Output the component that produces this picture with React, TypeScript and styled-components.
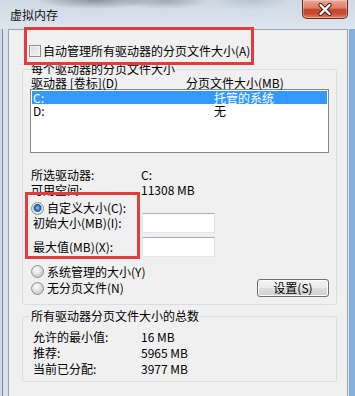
import React from 'react';
import styled, { createGlobalStyle } from 'styled-components';

const GlobalStyle = createGlobalStyle`
    html, body {
        margin: 0;
        padding: 0;
        background: #ffffff;
    }
    * {
        box-sizing: border-box;
    }
`;

const Window = styled.div`
    position: relative;
    width: 355px;
    height: 396px;
    overflow: hidden;
    display: flex;
    flex-direction: column;
    font-family: 'Noto Sans CJK SC', 'Liberation Sans', sans-serif;
    font-size: 12px;
    color: #000;
    background: linear-gradient(180deg, #d3dde8 0%, #dbe4ee 40px, #d3dfeb 100%);
`;

const TitleBar = styled.div`
    flex: none;
    height: 29px;
    display: flex;
    justify-content: space-between;
    align-items: flex-start;
    padding: 0 7px 0 10px;
    background:
        radial-gradient(60px 9px at 95px 0, rgba(70, 75, 80, 0.5), transparent),
        radial-gradient(45px 8px at 165px 1px, rgba(90, 95, 100, 0.4), transparent),
        radial-gradient(40px 10px at 250px 0, rgba(140, 160, 185, 0.4), transparent),
        linear-gradient(180deg, #cfd9e4 0%, #dde5ee 100%);
`;

const Title = styled.div`
    margin-top: 7px;
    line-height: 16px;
    font-size: 12px;
    color: #111;
`;

const CloseButton = styled.div`
    width: 46px;
    height: 19px;
    border: 1px solid #6a2a20;
    border-top: none;
    border-radius: 0 0 5px 5px;
    background: linear-gradient(180deg, #eaa998 0%, #dc7c65 45%, #c8472c 52%, #c64a30 75%, #e08060 100%);
    box-shadow: inset 0 0 0 1px rgba(255, 255, 255, 0.3);
    display: flex;
    align-items: center;
    justify-content: center;
`;

const Frame = styled.div`
    flex: 1;
    display: flex;
    min-height: 0;
`;

const LeftEdge = styled.div`
    width: 8px;
    flex: none;
    background: linear-gradient(90deg, #cdd8e3 0 2px, #7d8c9c 2px 3px, #d8e2ec 3px);
`;

const RightEdge = styled.div`
    width: 7px;
    flex: none;
    background: linear-gradient(90deg, #e4ebf2 0 1px, #8ba6c2 1px 2px, #85afdd 2px);
`;

const Client = styled.div`
    flex: 1;
    background: #f0f0f0;
    border: 1px solid #95a3b2;
    border-bottom: none;
    padding: 13px 10px 0 13px;
`;

const CheckRow = styled.label`
    display: flex;
    align-items: center;
    gap: 2px;
    height: 16px;
    line-height: 16px;
    padding-left: 7px;
`;

const Checkbox = styled.span`
    width: 12px;
    height: 12px;
    border: 1px solid #8e8f8f;
    background: linear-gradient(135deg, #d6d8dc 0%, #f7f7f7 100%);
    box-shadow: inset 0 0 0 1px #f4f4f4;
`;

const Group = styled.fieldset<{ $mt: number; $pt?: number; $pb: number }>`
    margin: ${(p) => p.$mt}px 0 0;
    padding: ${(p) => p.$pt ?? 0}px 7px ${(p) => p.$pb}px;
    border: 1px solid #d5dfe5;
    border-radius: 3px;
    min-width: 0;
`;

const Legend = styled.legend`
    padding: 0 1px;
    height: 16px;
    line-height: 16px;
    font-size: 12px;
`;

const HeaderRow = styled.div`
    display: flex;
    height: 12px;
    line-height: 12px;
    padding-left: 1px;
`;

const Cell = styled.span<{ $w?: number }>`
    flex: none;
    white-space: nowrap;
    width: ${(p) => (p.$w ? `${p.$w}px` : 'auto')};
`;

const ListBox = styled.div`
    height: 64px;
    border: 1px solid #828790;
    background: #ffffff;
    padding: 1px;
`;

const ListRow = styled.div<{ $selected?: boolean }>`
    display: flex;
    height: 13px;
    line-height: 13px;
    padding-left: 1px;
    background: ${(p) => (p.$selected ? '#3399ff' : 'transparent')};
    color: ${(p) => (p.$selected ? '#ffffff' : '#000000')};
`;

const InfoRow = styled.div<{ $h: number; $mt?: number }>`
    display: grid;
    grid-template-columns: 111px 1fr;
    align-items: center;
    height: ${(p) => p.$h}px;
    margin-top: ${(p) => p.$mt ?? 0}px;
    line-height: 16px;
    white-space: nowrap;
`;

const InfoLabel = styled.span<{ $indent?: number }>`
    padding-left: ${(p) => p.$indent ?? 1}px;
`;

const TextBox = styled.div`
    width: 73px;
    height: 20px;
    margin-left: 1px;
    background: #ffffff;
    border: 1px solid;
    border-color: #abadb3 #dbdfe6 #e3e9ef #e2e3ea;
`;

const RadioRow = styled.label<{ $h: number; $mt?: number }>`
    display: flex;
    align-items: center;
    gap: 3px;
    height: ${(p) => p.$h}px;
    margin-top: ${(p) => p.$mt ?? 0}px;
    line-height: 16px;
    padding-left: 1px;
    white-space: nowrap;
`;

const Radio = styled.span<{ $checked?: boolean }>`
    flex: none;
    width: 13px;
    height: 13px;
    border-radius: 50%;
    border: 1px solid #8e8f8f;
    background: ${(p) =>
        p.$checked
            ? 'radial-gradient(circle at 50% 45%, #b6dcff 0, #4a90da 1.5px, #1d5a9c 3.5px, #eef0f2 4.5px, #d6d8da 6px)'
            : 'radial-gradient(circle at 40% 35%, #fdfdfd 0, #e4e4e4 4px, #d0d0d0 6px)'};
`;

const Button = styled.div`
    margin-left: auto;
    width: 72px;
    height: 18px;
    border: 1px solid #707070;
    border-radius: 3px;
    background: linear-gradient(180deg, #f2f2f2 0%, #ebebeb 50%, #dddddd 50%, #cfcfcf 100%);
    box-shadow: inset 0 0 0 1px #fcfcfc;
    display: flex;
    align-items: center;
    justify-content: center;
    line-height: 16px;
`;

const Callout = styled.div<{ $x: number; $y: number; $w: number; $h: number }>`
    position: absolute;
    left: ${(p) => p.$x}px;
    top: ${(p) => p.$y}px;
    width: ${(p) => p.$w}px;
    height: ${(p) => p.$h}px;
    border: 3px solid #e23c3c;
    pointer-events: none;
`;

const drives = [
    { name: 'C:', size: '托管的系统', selected: true },
    { name: 'D:', size: '无', selected: false },
];

const totals = [
    { label: '允许的最小值:', value: '16 MB' },
    { label: '推荐:', value: '5965 MB' },
    { label: '当前已分配:', value: '3977 MB' },
];

export default function App() {
    return (
        <>
            <GlobalStyle />
            <Window>
                <TitleBar>
                    <Title>虚拟内存</Title>
                    <CloseButton>
                        <svg width='14' height='13' viewBox='0 0 14 13'>
                            <path d='M2.5 2 L11.5 11 M11.5 2 L2.5 11' stroke='#4a1b14' strokeWidth='4.2' strokeLinecap='round' />
                            <path d='M2.5 2 L11.5 11 M11.5 2 L2.5 11' stroke='#ffffff' strokeWidth='2.4' strokeLinecap='round' />
                        </svg>
                    </CloseButton>
                </TitleBar>
                <Frame>
                    <LeftEdge />
                    <Client>
                        <CheckRow>
                            <Checkbox />
                            <span>自动管理所有驱动器的分页文件大小(A)</span>
                        </CheckRow>
                        <Group $mt={2} $pb={7}>
                            <Legend>每个驱动器的分页文件大小</Legend>
                            <HeaderRow>
                                <Cell $w={155}>驱动器 [卷标](D)</Cell>
                                <Cell>分页文件大小(MB)</Cell>
                            </HeaderRow>
                            <ListBox>
                                {drives.map((d) => (
                                    <ListRow key={d.name} $selected={d.selected}>
                                        <Cell $w={181}>{d.name}</Cell>
                                        <Cell>{d.size}</Cell>
                                    </ListRow>
                                ))}
                            </ListBox>
                            <InfoRow $h={15} $mt={14}>
                                <InfoLabel>所选驱动器:</InfoLabel>
                                <span>C:</span>
                            </InfoRow>
                            <InfoRow $h={15}>
                                <InfoLabel>可用空间:</InfoLabel>
                                <span>11308 MB</span>
                            </InfoRow>
                            <RadioRow $h={16} $mt={3}>
                                <Radio $checked />
                                <span>自定义大小(C):</span>
                            </RadioRow>
                            <InfoRow $h={20} $mt={-3}>
                                <InfoLabel $indent={3}>初始大小(MB)(I):</InfoLabel>
                                <TextBox />
                            </InfoRow>
                            <InfoRow $h={20} $mt={4}>
                                <InfoLabel $indent={3}>最大值(MB)(X):</InfoLabel>
                                <TextBox />
                            </InfoRow>
                            <RadioRow $h={15} $mt={7}>
                                <Radio />
                                <span>系统管理的大小(Y)</span>
                            </RadioRow>
                            <RadioRow $h={18}>
                                <Radio />
                                <span>无分页文件(N)</span>
                                <Button>设置(S)</Button>
                            </RadioRow>
                        </Group>
                        <Group $mt={3} $pt={5} $pb={4}>
                            <Legend>所有驱动器分页文件大小的总数</Legend>
                            {totals.map((t) => (
                                <InfoRow key={t.label} $h={16}>
                                    <InfoLabel $indent={3}>{t.label}</InfoLabel>
                                    <span>{t.value}</span>
                                </InfoRow>
                            ))}
                        </Group>
                    </Client>
                    <RightEdge />
                </Frame>
                <Callout $x={24} $y={27} $w={230} $h={38} />
                <Callout $x={25} $y={192} $w={115} $h={67} />
            </Window>
        </>
    );
}
